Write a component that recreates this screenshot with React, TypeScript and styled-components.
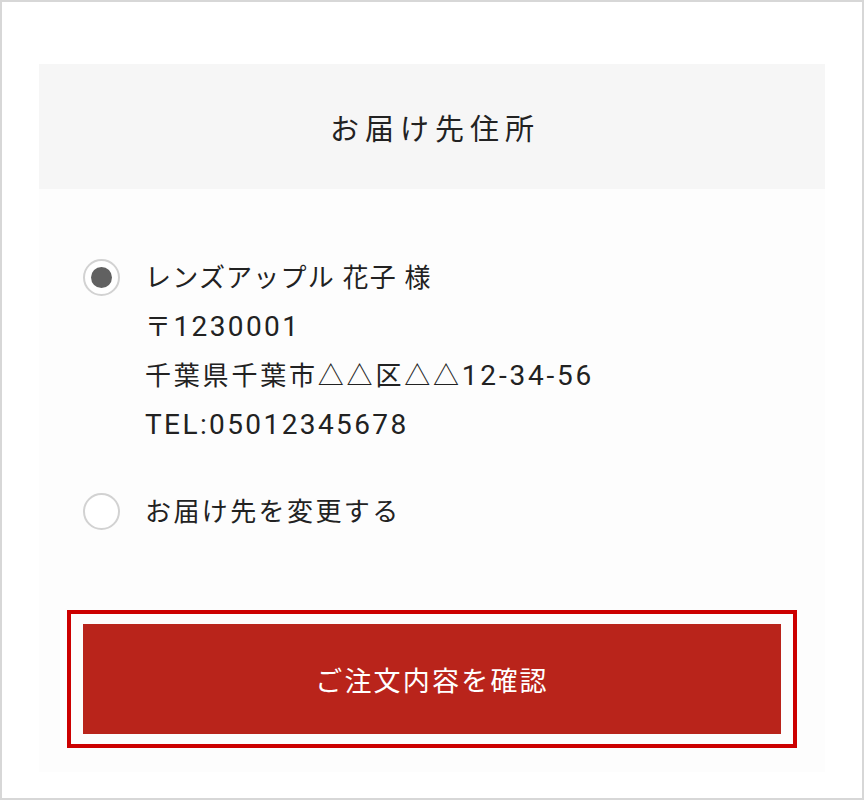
import React from 'react'
import styled, { createGlobalStyle } from 'styled-components'

const GlobalStyle = createGlobalStyle`
  html, body {
    margin: 0;
    padding: 0;
    background: #ffffff;
  }
  body {
    font-family: Roboto, "Noto Sans CJK JP", sans-serif;
    color: #222222;
  }
`

const Frame = styled.div`
  box-sizing: border-box;
  width: 864px;
  height: 800px;
  border: 2px solid #d7d7d7;
  padding: 62px 37px 0;
  display: flex;
  flex-direction: column;
`

const TitleBar = styled.div`
  height: 125px;
  background: #f6f6f6;
  display: flex;
  align-items: center;
  justify-content: center;
`

const Title = styled.h2`
  margin: 0;
  font-size: 29px;
  font-weight: 400;
  letter-spacing: 6px;
  padding-left: 6px;
  color: #222222;
`

const Panel = styled.div`
  background: #fdfdfd;
  padding: 65px 0 24px;
  display: flex;
  flex-direction: column;
  align-items: stretch;
`

const OptionList = styled.div`
  padding-left: 44px;
  display: flex;
  flex-direction: column;
  gap: 38px;
`

const Option = styled.label`
  display: flex;
  align-items: flex-start;
  gap: 25px;
  cursor: pointer;
`

const Radio = styled.span<{ $checked?: boolean }>`
  flex: none;
  box-sizing: border-box;
  width: 37px;
  height: 37px;
  margin-top: 5px;
  border-radius: 50%;
  border: 2px solid #d2d2d2;
  background: #ffffff;
  display: flex;
  align-items: center;
  justify-content: center;

  &::after {
    content: '';
    width: 21px;
    height: 21px;
    border-radius: 50%;
    background: ${(p) => (p.$checked ? '#616161' : 'transparent')};
  }
`

const Lines = styled.div`
  display: flex;
  flex-direction: column;
`

const Line = styled.span<{ $spacing?: number }>`
  display: block;
  height: 49px;
  font-size: 26px;
  line-height: 49px;
  letter-spacing: ${(p) => p.$spacing ?? 2.4}px;
  color: #222222;
  white-space: nowrap;
`

const Num = styled.span`
  font-size: 28px;
  line-height: 1;
`

const ButtonFrame = styled.div`
  align-self: center;
  margin-top: 73px;
  width: 730px;
  box-sizing: border-box;
  border: 4px solid #cc0000;
  padding: 10px 12px;
`

const SubmitButton = styled.button`
  display: block;
  width: 100%;
  height: 110px;
  border: none;
  background: #b9241b;
  color: #ffffff;
  font-family: Roboto, "Noto Sans CJK JP", sans-serif;
  font-size: 27px;
  font-weight: 400;
  letter-spacing: 2.2px;
  cursor: pointer;
`

export default function App() {
  return (
    <>
      <GlobalStyle />
      <Frame>
        <TitleBar>
          <Title>お届け先住所</Title>
        </TitleBar>
        <Panel>
          <OptionList>
            <Option>
              <Radio $checked />
              <Lines>
                <Line $spacing={1.2}>レンズアップル 花子 様</Line>
                <Line>
                  〒<Num>1230001</Num>
                </Line>
                <Line $spacing={2.8}>
                  千葉県千葉市△△区△△<Num>12-34-56</Num>
                </Line>
                <Line>
                  <Num>TEL:05012345678</Num>
                </Line>
              </Lines>
            </Option>
            <Option>
              <Radio />
              <Lines>
                <Line>お届け先を変更する</Line>
              </Lines>
            </Option>
          </OptionList>
          <ButtonFrame>
            <SubmitButton>ご注文内容を確認</SubmitButton>
          </ButtonFrame>
        </Panel>
      </Frame>
    </>
  )
}
